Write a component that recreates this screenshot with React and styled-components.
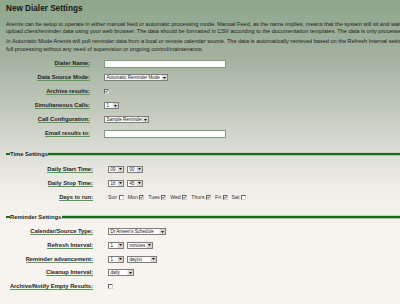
import React from 'react';
import styled, { createGlobalStyle } from 'styled-components';

const Global = createGlobalStyle`
  html, body { margin: 0; padding: 0; }
  body {
    width: 400px;
    height: 304px;
    overflow: hidden;
    font-family: "Liberation Sans", Arial, sans-serif;
    color: #222;
    background: linear-gradient(to bottom,
      #8ea68c 0px, #a2b29f 55px, #bcc5b6 100px, #d5d8cf 140px,
      #e6e6df 170px, #f2f0ea 200px, #f7f3ee 230px, #f7f3ef 304px);
  }
`;

const Page = styled.div`
  width: 400px;
  height: 304px;
  overflow: hidden;
  box-sizing: border-box;
  padding: 4px 0 0 6px;
`;

const Title = styled.h1`
  margin: 0;
  font-size: 8.2px;
  line-height: 10px;
  font-weight: bold;
  color: #161616;
`;

const Intro = styled.div`
  margin-top: 6.6px;
`;

const Para = styled.p`
  margin: 0 0 2.4px;
  font-size: 5.6px;
  line-height: 7.6px;
  white-space: nowrap;
  color: #202020;
`;

const Form = styled.div`
  display: grid;
  grid-template-columns: ${p => p.$labelW}px auto;
  column-gap: ${p => p.$gap}px;
  grid-auto-rows: ${p => p.$rowH}px;
  align-items: center;
  margin-top: ${p => p.$top}px;
`;

const Label = styled.span`
  justify-self: end;
  font-size: 5.8px;
  line-height: 6px;
  font-weight: bold;
  color: #1d1d1d;
  white-space: nowrap;
  border-bottom: 1px solid #5a985a;
`;

const Field = styled.div`
  display: flex;
  align-items: center;
  gap: ${p => p.$gap || 3}px;
`;

const TextInput = styled.span`
  display: block;
  width: 122px;
  height: 8px;
  box-sizing: border-box;
  background: #fff;
  border: 1px solid #7c9a7c;
`;

const SelectBox = styled.span`
  display: inline-flex;
  width: ${p => p.$w}px;
  height: 7px;
  box-sizing: border-box;
  border: 1px solid #7d7d7d;
  background: #fff;
`;

const SelectText = styled.span`
  flex: 1;
  font-size: 4.5px;
  line-height: 5px;
  padding-left: 1.5px;
  color: #111;
  overflow: hidden;
  white-space: nowrap;
`;

const SelectArrow = styled.span`
  width: 5px;
  display: flex;
  align-items: center;
  justify-content: center;
  background: #d8d5cf;
  border-left: 1px solid #eee;
`;

const Select = ({ w, children }) => (
  <SelectBox $w={w}>
    <SelectText>{children}</SelectText>
    <SelectArrow>
      <svg width="3" height="2" viewBox="0 0 3 2"><path d="M0 0H3L1.5 2Z" fill="#111" /></svg>
    </SelectArrow>
  </SelectBox>
);

const Box = styled.span`
  display: inline-flex;
  align-items: center;
  justify-content: center;
  width: 5px;
  height: 5px;
  box-sizing: border-box;
  background: #fff;
  border-top: 1px solid #666;
  border-left: 1px solid #666;
  border-right: 1px solid #cfcfcf;
  border-bottom: 1px solid #cfcfcf;
`;

const Check = ({ on }) => (
  <Box>
    {on && (
      <svg width="3" height="3" viewBox="0 0 3 3">
        <path d="M0.2 1.4L1.1 2.4L2.8 0.3" stroke="#111" strokeWidth="0.8" fill="none" />
      </svg>
    )}
  </Box>
);

const SectionHead = styled.div`
  display: flex;
  align-items: center;
  height: 8px;
  margin-top: ${p => p.$top}px;
`;

const HeadDash = styled.span`
  width: 3.5px;
  height: 2px;
  background: #196a20;
`;

const HeadText = styled.span`
  font-size: 5.8px;
  font-weight: bold;
  color: #1d1d1d;
  padding: 0 0.5px;
  white-space: nowrap;
`;

const HeadLine = styled.span`
  flex: 1;
  height: 2px;
  background: #196a20;
  box-shadow: 0 1px 0 #a9c6a6, 0 -1px 0 #c7d6c3;
`;

const Days = styled.div`
  display: flex;
  align-items: center;
  gap: 4px;
`;

const Day = styled.span`
  display: inline-flex;
  align-items: center;
  gap: 1.5px;
  font-size: 5.2px;
  color: #333;
`;

const days = [
  ['Sun', false], ['Mon', true], ['Tues', true], ['Wed', true],
  ['Thurs', true], ['Fri', true], ['Sat', false],
];

export default function App() {
  return (
    <>
      <Global />
      <Page>
        <Title>New Dialer Settings</Title>
        <Intro>
          <Para>
            Aremis can be setup to operate in either manual feed or automatic processing mode. Manual Feed, as the name implies, means that the system will sit and wait for you to<br />
            upload client/reminder data using your web browser. The data should be formatted in CSV according to the documentation templates. The data is only processed when uploaded.
          </Para>
          <Para>
            In Automatic Mode Aremis will pull reminder data from a local or remote calendar source. The data is automatically retrieved based on the Refresh Interval settings allowing<br />
            full processing without any need of supervision or ongoing control/maintenance.
          </Para>
        </Intro>

        <Form $labelW={84} $gap={14} $rowH={14} $top={3.3}>
          <Label>Dialer Name:</Label>
          <Field><TextInput /></Field>
          <Label>Data Source Mode:</Label>
          <Field><Select w={64}>Automatic Reminder Mode</Select></Field>
          <Label>Archive results:</Label>
          <Field><Check on /></Field>
          <Label>Simultaneous Calls:</Label>
          <Field><Select w={15}>1</Select></Field>
          <Label>Call Configuration:</Label>
          <Field><Select w={45}>Sample Reminder</Select></Field>
          <Label>Email results to:</Label>
          <Field><TextInput /></Field>
        </Form>

        <SectionHead $top={9.8}>
          <HeadDash />
          <HeadText>Time Settings</HeadText>
          <HeadLine />
        </SectionHead>

        <Form $labelW={87} $gap={15} $rowH={14} $top={4}>
          <Label>Daily Start Time:</Label>
          <Field><Select w={16}>09</Select><Select w={16}>00</Select></Field>
          <Label>Daily Stop Time:</Label>
          <Field><Select w={16}>16</Select><Select w={16}>45</Select></Field>
          <Label>Days to run:</Label>
          <Days>
            {days.map(([d, on]) => (
              <Day key={d}>{d}<Check on={on} /></Day>
            ))}
          </Days>
        </Form>

        <SectionHead $top={8.4}>
          <HeadDash />
          <HeadText>Reminder Settings</HeadText>
          <HeadLine />
        </SectionHead>

        <Form $labelW={87} $gap={15} $rowH={13.6} $top={4.2}>
          <Label>Calendar/Source Type:</Label>
          <Field><Select w={58}>Dr Ameen's Schedule</Select></Field>
          <Label>Refresh Interval:</Label>
          <Field><Select w={16}>1</Select><Select w={26}>minutes</Select></Field>
          <Label>Reminder advancement:</Label>
          <Field><Select w={16}>1</Select><Select w={30}>day(s)</Select></Field>
          <Label>Cleanup Interval:</Label>
          <Field><Select w={26}>daily</Select></Field>
          <Label>Archive/Notify Empty Results:</Label>
          <Field><Check /></Field>
        </Form>
      </Page>
    </>
  );
}
